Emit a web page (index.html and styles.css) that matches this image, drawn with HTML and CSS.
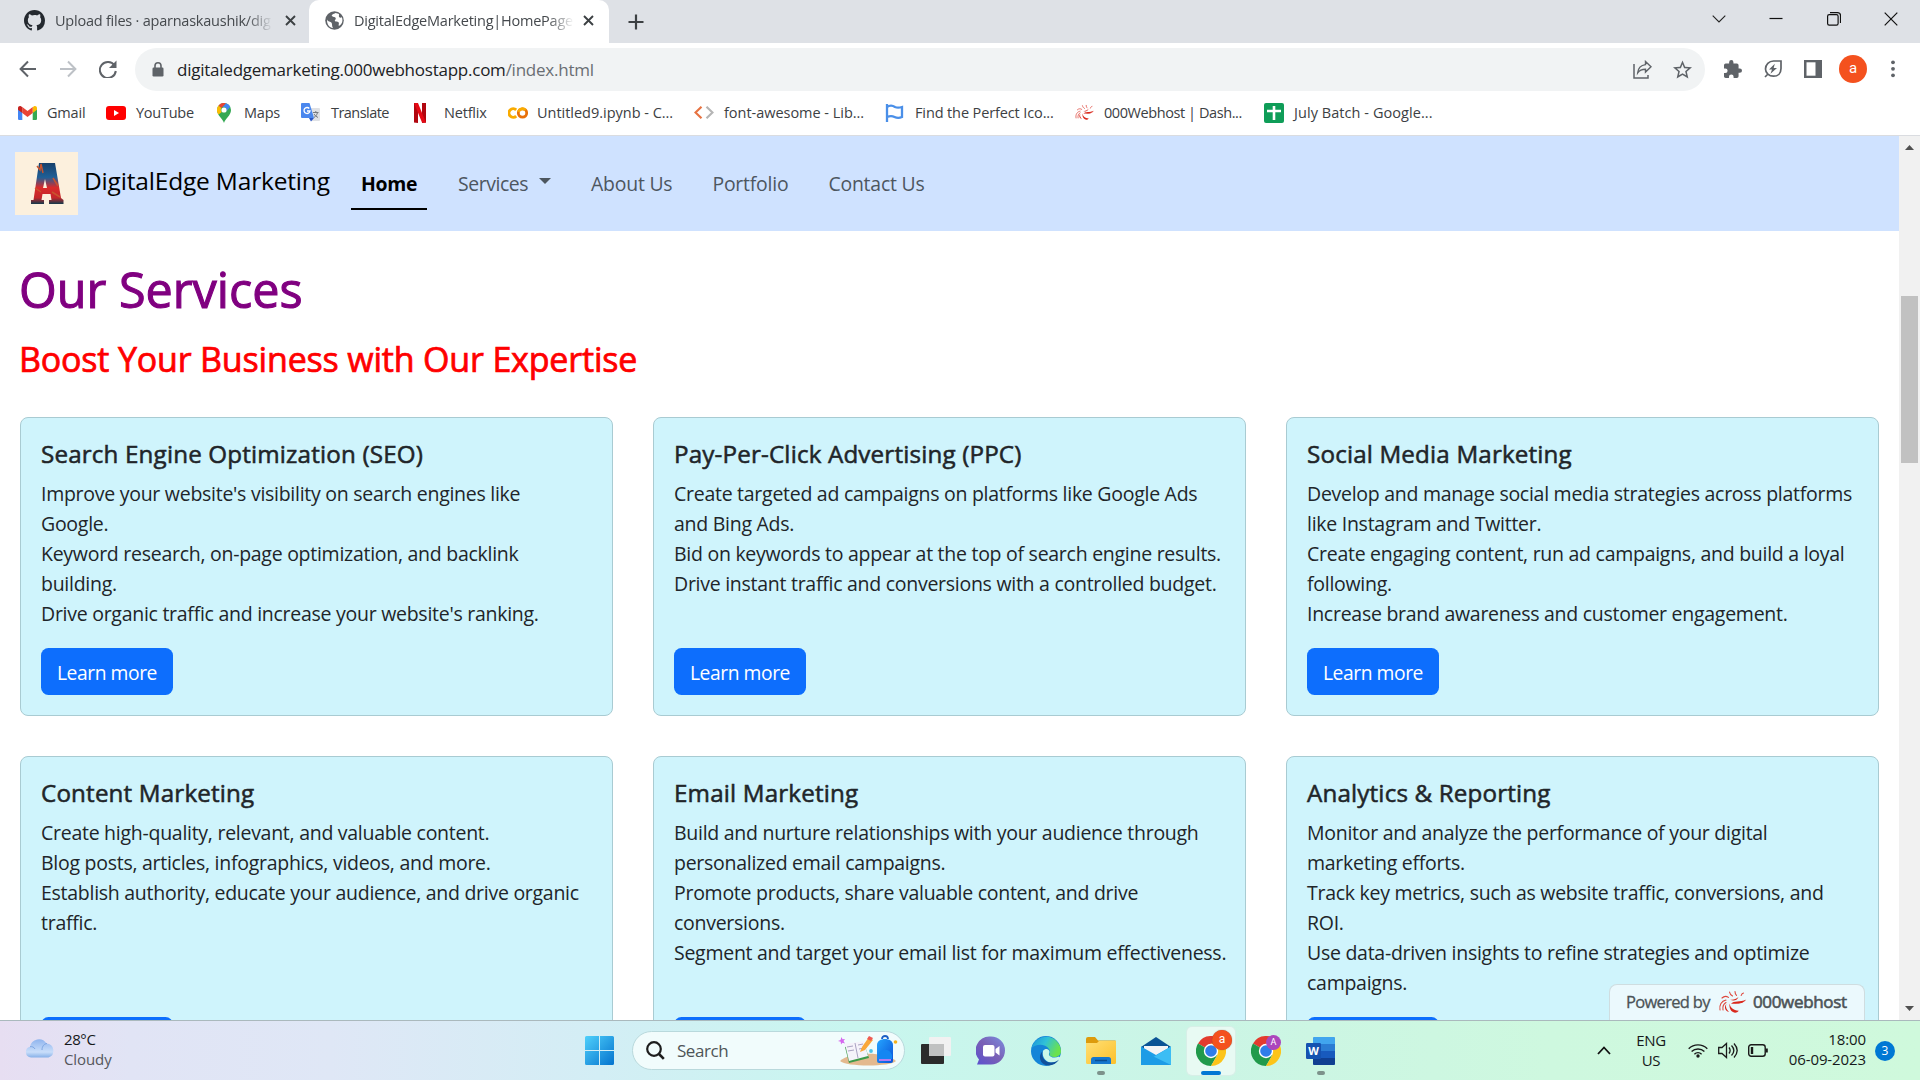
FILE: index.html
```
<!DOCTYPE html>
<html lang="en">
<head>
<meta charset="utf-8">
<title>DigitalEdgeMarketing|HomePage</title>
<link rel="stylesheet" href="styles.css">
</head>
<body>
<svg class="defs" width="0" height="0" aria-hidden="true">
  <defs>
    <symbol id="swirl" viewBox="0 0 28 24">
      <g fill="#d9281c">
        <path d="M27.800 9.500c-4.500 4.500-9.500 4-15.300 4.300 3-3.500 9-1.300 15.300-4.300Z"/>
        <path d="M27.500 10c-4 4.300-8 3.800-14 2.500 4 .5 9 .5 14-2.500Z"/>
        <path d="M11 13.500c1 4.500 3.500 6.500 9.300 7.300-3 4-10.300 1.500-9.300-7.300Z"/>
        <path d="M7.800 14c-1 3 .2 5.500 2.700 8-4-1-5.200-5-2.700-8Z"/>
        <path d="M11.500 9.500c3 .8 5.500-.2 8.500-2.500-1.500 3.800-5.500 4.500-8.500 2.500Z"/>
      </g>
      <g fill="none" stroke="#de463b" stroke-linecap="round" stroke-width="1.100">
        <path d="M1.500 20c-1-5 1.500-9 6-10M4.500 20c-.6-3.500.5-6 3-7.500M3.500 8c2-2 4.500-2 6.500-.6M11 2c.4 2 1.500 3.200 3 4M16.500 1.500c0 1.700.4 2.800 1.500 3.800M25 3c-1.300.3-2 1.200-2.300 2.500"/>
      </g>
    </symbol>
    <symbol id="chrome" viewBox="0 0 30 30">
      <path d="M15 15 2 7.500A15 15 0 0 1 28 7.500Z" fill="#e33b2e"/>
      <path d="M2 7.500A15 15 0 0 0 15 30l6.500-11.200L15 15Z" fill="#219a4b"/>
      <path d="M28 7.500A15 15 0 0 1 15 30l6.500-11.200L15 7.500Z" fill="#fcc419"/>
      <circle cx="15" cy="15" r="7.200" fill="#fff"/>
      <circle cx="15" cy="15" r="5.800" fill="#2f7de9"/>
    </symbol>
    <linearGradient id="winblue" x1="0" y1="0" x2="1" y2="1"><stop offset="0" stop-color="#4fd0fb"/><stop offset="1" stop-color="#0473ce"/></linearGradient>
    <linearGradient id="letter" x1="0" y1="0" x2="0" y2="1"><stop offset="0" stop-color="#17406b"/><stop offset=".35" stop-color="#1f5f96"/><stop offset=".6" stop-color="#d92b2b"/><stop offset=".85" stop-color="#c3262b"/><stop offset="1" stop-color="#113a4c"/></linearGradient>
    <linearGradient id="cloud" x1="0" y1="0" x2="0" y2="1"><stop offset="0" stop-color="#8fb4ee"/><stop offset=".7" stop-color="#c9defa"/><stop offset="1" stop-color="#86b0e8"/></linearGradient>
    <linearGradient id="chat" x1="1" y1="0" x2="0" y2="1"><stop offset="0" stop-color="#7b8fe0"/><stop offset=".5" stop-color="#7a5fb5"/><stop offset="1" stop-color="#5a50d0"/></linearGradient>
    <linearGradient id="edgea" x1="0" y1="0" x2="1" y2=".4"><stop offset="0" stop-color="#1a8fdc"/><stop offset=".5" stop-color="#30c1d8"/><stop offset="1" stop-color="#6be24c"/></linearGradient>
    <linearGradient id="folder" x1="0" y1="0" x2="1" y2="1"><stop offset="0" stop-color="#ffdf75"/><stop offset="1" stop-color="#fcc02a"/></linearGradient>
    <linearGradient id="bag" x1="0" y1="0" x2="1" y2="1"><stop offset="0" stop-color="#25a5ff"/><stop offset="1" stop-color="#0a52d8"/></linearGradient>
  </defs>
</svg>

<div class="browser">
  <header class="tabstrip">
    <div class="tab tab-idle">
      <svg width="21" height="21" viewBox="0 0 16 16"><path fill="#24292f" d="M8 0C3.580 0 0 3.580 0 8c0 3.540 2.290 6.530 5.470 7.590.4.070.55-.17.55-.38 0-.19-.01-.82-.01-1.490-2.010.37-2.530-.49-2.690-.94-.09-.23-.48-.94-.82-1.130-.28-.15-.68-.52-.01-.53.63-.01 1.080.58 1.230.82.72 1.210 1.870.87 2.330.66.070-.52.28-.87.51-1.070-1.780-.2-3.640-.89-3.640-3.950 0-.87.31-1.590.82-2.150-.08-.2-.36-1.020.08-2.120 0 0 .67-.21 2.200.82A7.600 7.600 0 0 1 8 3.860c.68 0 1.360.09 2 .27 1.530-1.040 2.200-.82 2.200-.82.44 1.100.16 1.920.08 2.120.51.56.82 1.270.82 2.150 0 3.070-1.870 3.750-3.650 3.950.29.25.54.73.54 1.480 0 1.070-.01 1.930-.01 2.200 0 .21.15.46.55.38A8 8 0 0 0 16 8c0-4.420-3.580-8-8-8Z"/></svg>
      <span class="tab-title">Upload files · aparnaskaushik/dig</span>
      <svg width="11" height="11" viewBox="0 0 11 11"><path d="m1 1 9 9M10 1l-9 9" stroke="#3c4043" stroke-width="1.900"/></svg>
    </div>
    <div class="tab tab-active">
      <svg width="19" height="19" viewBox="0 0 19 19"><circle cx="9.500" cy="9.500" r="9.300" fill="#5f6368"/><path d="M2 8.500c1 2.500 3.500 2 4.500 3.200 1 1.300 0 3 1.500 5.300-3.500-.5-6.300-3.500-6-8.500ZM10.500 2c-2 1.200-4.500 1.500-3.500 3 1.200 1.600 3 .4 3.700 1.900.6 1.600-1.500 2-.8 3.200.8 1.100 2.500.2 3.600 1.200 1.100 1-.4 2.600.4 3.700 3-1.500 4.400-5 3-8.700-1.500.8-3 .4-3-1-.1-1.300.6-2-.4-2.600Z" fill="#fff"/></svg>
      <span class="tab-title">DigitalEdgeMarketing|HomePage</span>
      <svg width="11" height="11" viewBox="0 0 11 11"><path d="m1 1 9 9M10 1l-9 9" stroke="#3c4043" stroke-width="1.900"/></svg>
    </div>
    <svg class="new-tab" width="16" height="16" viewBox="0 0 16 16"><path d="M8 .5v15M.5 8h15" stroke="#3c4043" stroke-width="2.200"/></svg>
    <div class="window-controls">
      <svg width="14" height="14" viewBox="0 0 14 14"><path d="m.7 3.700 6.300 6.300 6.300-6.300" fill="none" stroke="#222" stroke-width="1.100"/></svg>
      <svg width="14" height="14" viewBox="0 0 14 14"><path d="M.5 6.500h13" stroke="#111" stroke-width="1.200"/></svg>
      <svg width="14" height="14" viewBox="0 0 14 14"><rect x=".6" y="2.600" width="10.500" height="10.600" rx="1.600" fill="none" stroke="#111" stroke-width="1.200"/><path d="M3 .6h7.500a3 3 0 0 1 3 3V11" fill="none" stroke="#111" stroke-width="1.200"/></svg>
      <svg width="14" height="14" viewBox="0 0 14 14"><path d="m.7.7 12.600 12.600M13.300.7.7 13.300" stroke="#111" stroke-width="1.200"/></svg>
    </div>
  </header>

  <div class="toolbar">
    <div class="nav-buttons">
      <svg width="18" height="18" viewBox="0 0 18 18"><path d="M17 9H2M9 1.500 1.600 9 9 16.500" fill="none" stroke="#5f6368" stroke-width="2"/></svg>
      <svg width="18" height="18" viewBox="0 0 18 18"><path d="M1 9h15M9 1.500 16.400 9 9 16.500" fill="none" stroke="#bdc1c6" stroke-width="2"/></svg>
      <svg width="18" height="18" viewBox="0 0 18 18"><path d="M15.500 5.500A8 8 0 1 0 16.800 11" fill="none" stroke="#5f6368" stroke-width="2"/><path d="M17.500.5V8H10Z" fill="#5f6368"/></svg>
    </div>
    <div class="omnibox">
      <svg width="12" height="15" viewBox="0 0 12 15"><path d="M3 6V3.800a3 3 0 0 1 6 0V6" fill="none" stroke="#5f6368" stroke-width="1.600"/><rect x=".5" y="5.500" width="11" height="9" rx="1.200" fill="#5f6368"/></svg>
      <span class="url">digitaledgemarketing.000webhostapp.com<span class="path">/index.html</span></span>
      <svg class="share" width="19" height="19" viewBox="0 0 19 19"><path d="M1 4v14h14v-3" fill="none" stroke="#5f6368" stroke-width="1.500"/><path d="M12.500 1.500 18 6.800l-5.500 5.300V9.200c-3.500 0-6 1-7.800 3.600.4-4.300 3-7.600 7.800-8.200Z" fill="none" stroke="#5f6368" stroke-width="1.400"/></svg>
      <svg class="star" width="19" height="19" viewBox="2 1.500 20 20"><path d="m22 9.240-7.190-.62L12 2 9.190 8.630 2 9.240l5.460 4.730L5.820 21 12 17.270 18.180 21l-1.630-7.030L22 9.240ZM12 15.400l-3.760 2.270 1-4.280-3.320-2.880 4.380-.38L12 6.100l1.710 4.040 4.380.38-3.320 2.880 1 4.280L12 15.400Z" fill="#5f6368"/></svg>
    </div>
    <div class="toolbar-icons">
      <svg width="18" height="18" viewBox="2 1 21 21"><path fill="#5f6368" d="M20.500 11H19V7a2 2 0 0 0-2-2h-4V3.500a2.500 2.500 0 0 0-5 0V5H4a2 2 0 0 0-2 2v3.800h1.500a2.700 2.700 0 0 1 0 5.400H2V20c0 1.100.9 2 2 2h3.800v-1.500a2.700 2.700 0 0 1 5.400 0V22H17a2 2 0 0 0 2-2v-4h1.500a2.500 2.500 0 0 0 0-5Z"/></svg>
      <svg width="18" height="18" viewBox="0 0 18 18"><path d="M1 17l2.500-2.500M17 1v7.500c0 4.500-3 7.700-7.500 7.700S1.500 13 1.500 9C1.500 4.500 5 1 9.500 1Z" fill="none" stroke="#5f6368" stroke-width="1.700"/><path d="M10.800 3.800 5 9.500h3l-1.500 4.200L13 8H9.700Z" fill="#5f6368"/></svg>
      <svg width="18" height="18" viewBox="0 0 18 18"><path d="M0 0h18v18H0Z" fill="#5f6368"/><path d="M2.500 2.300h9v13.400h-9Z" fill="#fff"/></svg>
      <span class="avatar">a</span>
      <svg width="4" height="18" viewBox="0 0 4 18"><g fill="#5f6368"><circle cx="2" cy="2.300" r="1.900"/><circle cx="2" cy="8.800" r="1.900"/><circle cx="2" cy="15.300" r="1.900"/></g></svg>
    </div>
  </div>

  <nav class="bookmarks">
    <a class="bm bm-gmail"><svg width="19" height="14" viewBox="0 0 19 14"><path d="M0 2v10.700C0 13.400.6 14 1.300 14h3V6.500Z" fill="#4285f4"/><path d="M19 2v10.700c0 .7-.6 1.300-1.300 1.300h-3V6.500Z" fill="#34a853"/><path d="M14.700 1v6L19 3.800V2c0-1.700-1.800-2.500-3.200-1.600Z" fill="#fbbc04"/><path d="M4.300 7V1l5.200 4 5.200-4v6l-5.200 4Z" fill="#ea4335"/><path d="M0 2v1.800L4.300 7V1L3.200.4C1.800-.5 0 .3 0 2Z" fill="#c5221f"/></svg><span>Gmail</span></a>
    <a class="bm bm-youtube"><svg width="20" height="14" viewBox="0 0 20 14"><rect width="20" height="14" rx="3" fill="#f00"/><path d="m8 4 5 3-5 3Z" fill="#fff"/></svg><span>YouTube</span></a>
    <a class="bm bm-maps"><svg width="14" height="20" viewBox="0 0 14 20"><path d="M7 20C6 16 0 12.500 0 7a7 7 0 0 1 14 0c0 5.500-6 9-7 13Z" fill="#34a853"/><path d="M1.500 11.500A7 7 0 0 1 1.600 2.500L4.600 5a3 3 0 0 0 .2 4Z" fill="#fbbc04"/><path d="M1.600 2.500A7 7 0 0 1 9 .3L4.600 5Z" fill="#ea4335"/><path d="M9 .3A7 7 0 0 1 13.200 3.800L9.300 8.800A3 3 0 0 0 5 4.700Z" fill="#4285f4"/><circle cx="7" cy="7" r="2.600" fill="#fff"/></svg><span>Maps</span></a>
    <a class="bm bm-translate"><svg width="19" height="19" viewBox="0 0 19 19"><path d="M8 5h10a1 1 0 0 1 1 1v11a1 1 0 0 1-1 1h-7Z" fill="#dfe1e5"/><path d="M12 9.500h5.500M14.800 8v1.500M16.500 9.500c-.5 2.500-2 4-3.500 5M13 11c1 1.500 2.200 2.800 4 3.500" stroke="#75797e" fill="none"/><path d="M1 0h7.500L13 15H1a1 1 0 0 1-1-1V1a1 1 0 0 1 1-1Z" fill="#4a87ee"/><path d="M8 15h5l-3 3.500Z" fill="#2a56c6"/><path d="M8.300 5.500A3 3 0 1 0 9 8H6" stroke="#fff" stroke-width="1.300" fill="none"/></svg><span>Translate</span></a>
    <a class="bm bm-netflix"><svg width="12" height="20" viewBox="0 0 12 20"><path d="M0 0h4v20l-4-.5ZM8 0h4v19.500L8 20Z" fill="#b1060f"/><path d="M0 0h4l8 19.700-4-.3Z" fill="#e50914"/></svg><span>Netflix</span></a>
    <a class="bm bm-colab"><svg width="20" height="12" viewBox="0 0 20 12"><path d="M8.200 2.900a4.300 4.300 0 1 0 0 6.200" fill="none" stroke="#f9ab00" stroke-width="3"/><circle cx="14.500" cy="6" r="4.200" fill="none" stroke="#e8710a" stroke-width="2.800"/><path d="M10.500 4.800a4.200 4.200 0 0 1 7-1.800" fill="none" stroke="#f9ab00" stroke-width="2.800"/></svg><span>Untitled9.ipynb - C...</span></a>
    <a class="bm bm-fa"><svg width="20" height="13" viewBox="0 0 20 13"><path d="M7.500.8 1.500 6.500l6 5.700" fill="none" stroke="#e77342" stroke-width="2.200"/><path d="m12.500.8 6 5.700-6 5.700" fill="none" stroke="#b5b5b5" stroke-width="2.200"/></svg><span>font-awesome - Lib...</span></a>
    <a class="bm bm-flag"><svg width="19" height="18" viewBox="0 0 19 18"><path d="M2 0v18M2 3c3-2 5-2 8 0 2 1 4 1 7 0v10c-3 1.500-5 1.300-7.500 0S4.500 12 2 13" fill="none" stroke="#4a8fe8" stroke-width="2.300"/></svg><span>Find the Perfect Ico...</span></a>
    <a class="bm bm-webhost"><svg width="19" height="17"><use href="#swirl"/></svg><span>000Webhost | Dash...</span></a>
    <a class="bm bm-sheets"><svg width="20" height="20" viewBox="0 0 20 20"><rect width="20" height="20" rx="2" fill="#0f9d58"/><path d="M10 3v14M3 8h14" stroke="#fff" stroke-width="2.600"/></svg><span>July Batch - Google...</span></a>
  </nav>

  <div class="viewport">
    <main class="page">
      <nav class="navbar">
        <svg class="logo" width="63" height="63" viewBox="0 0 63 63"><rect width="63" height="63" fill="#fcf0dd"/><path d="M24 11h16l6 35 2.500 2v4H34v-4h2.500L35.500 42H27.500L26.500 48H29v4H16v-4h2.500Z" fill="url(#letter)"/><path d="m30 27 2 9h-4Z" fill="#fcf0dd"/><path d="m22 14 3 4 1-6 2 9M38 26l5 8M20 36l6 4M37 40l8 5" stroke="#c8542e" stroke-width="1.500" fill="none"/></svg>
        <a class="brand">DigitalEdge Marketing</a>
        <ul class="menu">
          <li class="active">Home</li>
          <li class="dropdown">Services</li>
          <li>About Us</li>
          <li>Portfolio</li>
          <li>Contact Us</li>
        </ul>
      </nav>
      <section class="services">
        <h1>Our Services</h1>
        <h2>Boost Your Business with Our Expertise</h2>
        <div class="cards">
          <article class="card"><h3>Search Engine Optimization (SEO)</h3>
            <p>Improve your website's visibility on search engines like<br>Google.<br>Keyword research, on-page optimization, and backlink<br>building.<br>Drive organic traffic and increase your website's ranking.</p>
            <a class="btn">Learn more</a></article>
          <article class="card"><h3>Pay-Per-Click Advertising (PPC)</h3>
            <p>Create targeted ad campaigns on platforms like Google Ads<br>and Bing Ads.<br>Bid on keywords to appear at the top of search engine results.<br>Drive instant traffic and conversions with a controlled budget.</p>
            <a class="btn">Learn more</a></article>
          <article class="card"><h3>Social Media Marketing</h3>
            <p>Develop and manage social media strategies across platforms<br>like Instagram and Twitter.<br>Create engaging content, run ad campaigns, and build a loyal<br>following.<br>Increase brand awareness and customer engagement.</p>
            <a class="btn">Learn more</a></article>
          <article class="card"><h3>Content Marketing</h3>
            <p>Create high-quality, relevant, and valuable content.<br>Blog posts, articles, infographics, videos, and more.<br>Establish authority, educate your audience, and drive organic<br>traffic.</p>
            <a class="btn"></a></article>
          <article class="card"><h3>Email Marketing</h3>
            <p>Build and nurture relationships with your audience through<br>personalized email campaigns.<br>Promote products, share valuable content, and drive<br>conversions.<br>Segment and target your email list for maximum effectiveness.</p>
            <a class="btn"></a></article>
          <article class="card"><h3>Analytics &amp; Reporting</h3>
            <p>Monitor and analyze the performance of your digital<br>marketing efforts.<br>Track key metrics, such as website traffic, conversions, and<br>ROI.<br>Use data-driven insights to refine strategies and optimize<br>campaigns.</p>
            <a class="btn"></a></article>
        </div>
      </section>
    </main>
    <div class="powered"><span class="by">Powered by</span><svg width="29" height="24"><use href="#swirl"/></svg><span class="host">000webhost</span></div>
    <div class="scrollbar">
      <svg width="9" height="5" viewBox="0 0 9 5"><path d="M0 5 4.500 0 9 5Z" fill="#505050"/></svg>
      <div class="track"><div class="thumb"></div></div>
      <svg width="9" height="5" viewBox="0 0 9 5"><path d="m0 0 4.500 5L9 0Z" fill="#505050"/></svg>
    </div>
  </div>
</div>

<footer class="taskbar">
  <div class="weather">
    <svg width="30" height="20" viewBox="0 0 30 20"><path d="M6 19.500A5.500 5.500 0 0 1 5 8.700 9 9 0 0 1 21.500 5.500 7.200 7.200 0 0 1 23.500 19.500Z" fill="url(#cloud)"/><path d="M10 11c-1-2-3-2.600-5-2.300M17 12c0-4 2.500-6.400 5-6.500" fill="none" stroke="#7da5e2" stroke-width="1"/></svg>
    <div class="readout"><div>28°C</div><div class="muted">Cloudy</div></div>
  </div>
  <div class="dock">
    <svg class="start" width="30" height="30" viewBox="0 0 30 30"><path d="M0 1.500A1.500 1.500 0 0 1 1.500 0H14v14H0ZM15 0h12.500A1.500 1.500 0 0 1 29 1.500V14H15ZM0 15h14v14H1.500A1.500 1.500 0 0 1 0 27.500ZM15 15h14v12.500a1.500 1.500 0 0 1-1.500 1.500H15Z" fill="url(#winblue)"/></svg>
    <div class="search">
      <svg width="19" height="19" viewBox="0 0 19 19"><circle cx="8" cy="8" r="6.800" fill="none" stroke="#1d1d1d" stroke-width="2.200"/><path d="m13 13 4.800 4.800" stroke="#1d1d1d" stroke-width="2.600"/></svg>
      <span>Search</span>
      <svg width="60" height="32" viewBox="0 0 60 32"><path d="M2 26c10-9 45-10 56 0-5 6-50 6-56 0Z" fill="#e3b98f"/><path d="m7 12 19-4 5 15-20 5Z" fill="#3f9b4a"/><path d="m7 9 19-3 4 15-19 5Z" fill="#f5f3fa"/><path d="m17 8 3 15M9 12l6-1M10 16l6-1M20 10l5-1M21 14l5-1" stroke="#a9a3c2" stroke-width="1"/><path d="m22 17 2-5 7-10 4 3-8 10Z" fill="#f9a83a"/><path d="m29 4 2-3 4 2-2 3Z" fill="#ef5a53"/><path d="M39 26V10c0-8 16-8 16 0v16q0 2-2 2H41q-2 0-2-2Z" fill="url(#bag)"/><path d="M44 4c0-4 6-4 6 0" fill="none" stroke="#1d5fc4" stroke-width="1.800"/><path d="M40 20c2-7 12-7 14 0v4H40Z" fill="#1486f2"/><path d="M41 25h12" stroke="#b27bf2" stroke-width="2"/><path d="m3.500 2 1 2.300L7 4l-1.500 2L7 8.500l-2.500-.8L3 9.500l-.3-2.700L0 6l2.500-1Z" fill="#d567ef"/><circle cx="33" cy="16" r="1.900" fill="#4cc3e6"/><circle cx="57.500" cy="7" r="1.800" fill="#f6b21b"/></svg>
    </div>
    <div class="apps">
      <div class="app"><svg width="30" height="30" viewBox="0 0 30 30"><rect y="8" width="23" height="20" rx="1" fill="#2b2b2b"/><rect x="8" y="1" width="22" height="19" rx="1" fill="#f1f1f1"/><path d="M8 8h15v12H8Z" fill="#c0c1c1"/></svg></div>
      <div class="app"><svg width="30" height="30" viewBox="0 0 30 30"><path d="M15 .5a14 14 0 0 1 0 28H1l2-5A14 14 0 0 1 15 .500Z" fill="url(#chat)"/><rect x="7" y="9" width="11.500" height="11.500" rx="2" fill="#fff"/><path d="m19.500 13 4-3v9.500l-4-3Z" fill="#fff"/></svg></div>
      <div class="app"><svg width="30" height="30" viewBox="0 0 30 30"><circle cx="15" cy="15" r="15" fill="#1585d8"/><path d="M.5 12A15 15 0 0 1 30 15c0 4-3 6-7 6-3 0-4.500-1-4.500-2.500S20 16 18 13C14 7 4 8 .500 12Z" fill="url(#edgea)"/><path d="M12 15c2-3 6-2.500 6.500.5.300 1.500-1 2-.5 3.500 1 2.500 6 3.500 10 1.500l1.500 1.500c-2 3-5 4.500-9 4.500-6 0-10-6-8.500-11.500Z" fill="#cbf7e9"/><path d="M11.500 15.500C10 21 14 27 20 26.500c3.500 0 6-1 8-3-4 7-14 8-18 2-2-4-1-8 1.500-10Z" fill="#12509a"/></svg></div>
      <div class="app"><svg width="30" height="28" viewBox="0 0 30 28"><path d="M0 6V2q0-2 2-2h7l3 3.500h17q1 0 1 1V10H0Z" fill="#dd9b0c"/><path d="M0 6h11l2-2h17v21.500q0 1.500-1.500 1.500h-27Q0 27 0 25.500Z" fill="url(#folder)"/><path d="M5 27v-4.500q0-2.500 2.500-2.500h15q2.500 0 2.500 2.500V27Z" fill="#1577ce"/><path d="M9 23.500h12" stroke="#0b4d91" stroke-width="1.500"/></svg><i class="dot"></i></div>
      <div class="app"><svg width="30" height="28" viewBox="0 0 30 28"><path d="M0 10 15 0l15 10v4H0Z" fill="#0b5395"/><path d="M3 9h24v13H3Z" fill="#f4f4f6"/><path d="M0 9.500 15 18l15-8.500V28H0Z" fill="#1f9ee8"/><path d="m30 9.500-18 10.800L27 28h3Z" fill="#3cbdf4"/><path d="M12.500 19.500 30 28H0V9.500Z" fill="#1c9ce6"/></svg></div>
      <div class="app current"><svg width="30" height="30"><use href="#chrome"/></svg><b class="profile orange">a</b><i class="dot"></i></div>
      <div class="app"><svg width="30" height="30"><use href="#chrome"/></svg><b class="profile purple">A</b></div>
      <div class="app word"><svg width="30" height="28" viewBox="0 0 30 28"><rect x="7" width="22" height="28" rx="1.500" fill="#2b7cd3"/><path d="M7 1.500Q7 0 8.500 0h19Q29 0 29 1.500V7H7Z" fill="#41a5ee"/><path d="M7 14h22v7H7Z" fill="#185abd"/><path d="M7 21h22v5.500q0 1.500-1.500 1.500h-19Q7 28 7 26.500Z" fill="#103f91"/><rect y="6" width="15" height="16" rx="1.200" fill="#1552b0"/></svg><b class="wletter">W</b><i class="dot"></i></div>
    </div>
  </div>
  <div class="tray">
    <svg width="14" height="9" viewBox="0 0 14 9"><path d="m1 8 6-6.500L13 8" fill="none" stroke="#111" stroke-width="1.800"/></svg>
    <div class="lang"><div>ENG</div><div>US</div></div>
    <svg class="wifi" width="20" height="15" viewBox="0 0 20 15"><g fill="none" stroke="#1a1a1a" stroke-width="1.400"><path d="M.7 5.800a13 13 0 0 1 18.600 0M3.600 8.600a9 9 0 0 1 12.800 0M6.400 11.200a5.200 5.200 0 0 1 7.200 0"/></g><circle cx="10" cy="13" r="1.700" fill="#1a1a1a"/></svg>
    <svg class="sound" width="20" height="17" viewBox="0 0 20 17"><g fill="none" stroke="#1a1a1a" stroke-width="1.300"><path d="M.7 5.500H4L8.500 1.500v14L4 11.500H.7ZM11 5.500c1.500 2 1.500 4 0 6M13.500 3.500c3 3.200 3 6.800 0 10M16 1.500c4 4.400 4 9.600 0 14"/></g></svg>
    <svg class="battery" width="20" height="13" viewBox="0 0 20 13"><rect x=".7" y=".7" width="16.500" height="11.500" rx="2.500" fill="none" stroke="#1a1a1a" stroke-width="1.400"/><path d="M2.800 3h2.400v7H2.800ZM17.500 4.500h2.300v4h-2.300Z" fill="#1a1a1a"/></svg>
    <div class="clock"><div>18:00</div><div>06-09-2023</div></div>
    <span class="count">3</span>
  </div>
</footer>
</body>
</html>
```
FILE: styles.css
```
* { box-sizing: border-box; }
html, body { height: 100%; }
body {
  margin: 0;
  width: 1920px;
  height: 1080px;
  overflow: hidden;
  display: flex;
  flex-direction: column;
  background: #fff;
  color: #212529;
  font-family: "Open Sans", "Noto Sans", sans-serif;
}
svg { display: block; flex: none; }
.defs { position: absolute; }
.browser { height: 1020px; display: flex; flex-direction: column; }

/* Tab strip */
.tabstrip {
  height: 43px;
  flex: none;
  display: flex;
  align-items: center;
  background: #dee1e6;
}
.tab { height: 43px; display: flex; align-items: center; font-size: 14.5px; letter-spacing: -0.23px; color: #45494d; }
.tab-idle { width: 309px; padding: 0 0 2px 24px; border-radius: 0 0 10px 0; }
.tab-idle .tab-title { width: 218px; margin: 0 12px 0 10px; }
.tab-active { width: 300px; padding: 0 0 2px 16px; background: #fff; border-radius: 10px 10px 0 0; }
.tab-active .tab-title { width: 220px; margin: 0 9px 0 10px; }
.tab-title {
  overflow: hidden;
  white-space: nowrap;
  -webkit-mask-image: linear-gradient(90deg, #000 88%, transparent);
  mask-image: linear-gradient(90deg, #000 88%, transparent);
}
.new-tab { margin-left: 19px; }
.window-controls { margin-left: auto; padding: 0 22px 6px 0; display: flex; gap: 43.500px; }

/* Address bar */
.toolbar { height: 53px; flex: none; display: flex; align-items: center; padding: 0 25px 0 19px; }
.nav-buttons { width: 116px; padding-bottom: 1px; display: flex; gap: 22px; }
.omnibox {
  width: 1570px;
  height: 43px;
  display: flex;
  align-items: center;
  padding: 0 13px 0 17px;
  border-radius: 22px;
  background: #f1f3f4;
}
.url { margin-left: 13px; font-size: 17px; letter-spacing: -0.24px; color: #202124; }
.path { color: #6a6e73; }
.share { margin-left: auto; }
.star { margin-left: 21px; }
.toolbar-icons { margin-left: 19px; flex: 1; display: flex; align-items: center; padding-bottom: 1px; }
.toolbar-icons svg + svg { margin-left: 22px; }
.avatar {
  width: 28px;
  height: 28px;
  margin: 0 24px 0 17px;
  border-radius: 50%;
  background: #f4511e;
  color: #fff;
  text-align: center;
  font: 15px/27px "Roboto", sans-serif;
}

/* Bookmarks */
.bookmarks {
  height: 40px;
  flex: none;
  display: flex;
  align-items: center;
  padding: 0 0 6px 18px;
  border-bottom: 1px solid #dadce0;
}
.bm { display: flex; align-items: center; gap: 10px; font-size: 14.5px; letter-spacing: -0.2px; color: #3c4043; white-space: nowrap; }
.bm-gmail { width: 88px; }
.bm-youtube { width: 111px; letter-spacing: -0.25px; }
.bm-maps { width: 84px; gap: 13px; }
.bm-translate { width: 113px; gap: 11px; letter-spacing: -0.55px; }
.bm-netflix { width: 94px; gap: 18px; }
.bm-colab { width: 186px; gap: 9px; letter-spacing: -0.02px; }
.bm-fa { width: 191px; letter-spacing: -0.03px; }
.bm-flag { width: 190px; gap: 11px; letter-spacing: -0.12px; }
.bm-webhost { width: 189px; letter-spacing: -0.42px; }
.bm-sheets { letter-spacing: 0.06px; }

/* Page viewport */
.viewport { position: relative; height: 884px; flex: none; display: flex; overflow: hidden; }
.page { width: 1899px; flex: none; }
.navbar { height: 95px; padding: 0 0 0 15px; display: flex; align-items: center; background: #cfe2ff; }
.brand { width: 267px; margin: -6px 0 0 6px; font-size: 24.5px; letter-spacing: -0.18px; color: #000; white-space: nowrap; }
.menu { margin: 0; padding: 0; display: flex; list-style: none; gap: 20px; font-size: 19.4px; letter-spacing: -0.2px; color: #4d565f; }
.menu li { height: 53px; padding: 12px 10px 0; line-height: 30px; border-bottom: 2px solid transparent; }
.menu .active { width: 76px; font-weight: 700; letter-spacing: -0.3px; color: #000; border-color: #000; }
.menu .dropdown { width: 114px; padding-left: 11px; display: flex; gap: 11px; letter-spacing: -0.42px; }
.dropdown::after {
  content: "";
  margin-top: 9px;
  height: 0;
  border: 6px solid transparent;
  border-top-color: #4d565f;
  border-bottom: 0;
}

.services { padding: 28px 20px 0; }
/* The stroke thickens the regular cut to a medium weight. */
h1, h2, h3 { margin: 0; font-weight: 500; white-space: nowrap; -webkit-text-stroke: 0.022em currentColor; }
h1 { margin-left: -1px; font-size: 48.5px; line-height: 60px; letter-spacing: 0; color: purple; }
h2 { margin: 19px 0 0 -1px; font-size: 34px; line-height: 42px; letter-spacing: -0.18px; color: red; }
.cards { margin-top: 37px; display: grid; grid-template-columns: repeat(3, 593px); gap: 40px; }
.card {
  min-height: 299px;
  padding: 21px 20px 20px;
  display: flex;
  flex-direction: column;
  align-items: flex-start;
  border: 1px solid #a9cbd2;
  border-radius: 8px;
  background: #cff4fc;
}
h3 { font-size: 24.2px; line-height: 30px; letter-spacing: 0.16px; }
.card p { margin: 10px 0 19px; font-size: 19.5px; line-height: 30px; letter-spacing: -0.27px; white-space: nowrap; }
.btn {
  width: 132px;
  height: 47px;
  margin-top: auto;
  border-radius: 7.5px;
  background: #0d6efd;
  color: #fff;
  text-align: center;
  font-size: 19.3px;
  line-height: 50px;
  letter-spacing: -0.45px;
}

.powered {
  position: absolute;
  right: 55px;
  bottom: 0;
  width: 256px;
  height: 36px;
  display: flex;
  align-items: center;
  padding: 0 0 2px 16px;
  border: 1px solid #cfdde0;
  border-bottom: 0;
  border-radius: 8px 8px 0 0;
  background: #ebf9fd;
  color: #4c5357;
  font-size: 16.500px;
}
.by { width: 92px; letter-spacing: -0.68px; -webkit-text-stroke: 0.3px currentColor; }
.host { margin-left: 6px; font: 17px "Open Sans", sans-serif; letter-spacing: -0.35px; -webkit-text-stroke: 0.6px currentColor; }

.scrollbar { width: 21px; display: flex; flex-direction: column; align-items: center; padding: 9px 0; background: #f1f1f1; }
.track { flex: 1; width: 17px; padding-top: 146px; }
.thumb { height: 167px; background: #c1c1c1; }

/* Taskbar */
.taskbar {
  height: 60px;
  display: flex;
  align-items: center;
  border-top: 1px solid #aab9bd;
  background: linear-gradient(90deg, #e7def2 0, #e1e4f5 130px, #dfe7f6 330px, #d3eef5 600px, #c8f6ef 850px, #cbf5e5 1200px, #cef8df 1550px, #cff9dc 1920px);
  font-size: 15px;
  line-height: 20px;
  color: #16191a;
}
.weather { width: 585px; padding-left: 25px; display: flex; align-items: center; gap: 9px; letter-spacing: -0.4px; }
.weather > svg { margin-top: -6px; }
.readout { padding-bottom: 4px; }
.muted { color: #55575c; letter-spacing: -0.1px; }
.dock { display: flex; align-items: center; }
.start { margin-right: 17px; }
.search {
  width: 273px;
  height: 39px;
  display: flex;
  align-items: center;
  padding: 0 6px 0 13px;
  border: 1px solid #b9d9dc;
  border-radius: 20px;
  background: #f1fcfc;
  font-size: 17px;
  letter-spacing: -0.45px;
  color: #4e5557;
}
.search span { margin: 0 auto 0 12px; }
.apps { display: flex; margin-left: 7px; gap: 7px; }
.app { position: relative; width: 48px; height: 48px; display: flex; align-items: center; justify-content: center; border-radius: 5px; }
.current { background: #e8faf3; box-shadow: 0 0 0 1px #d7efe7; }
.dot { position: absolute; left: 20px; bottom: 0; width: 8px; height: 4px; border-radius: 2px; background: #7d928b; }
.current .dot { left: 14px; width: 20px; background: #0078d4; }
.profile { position: absolute; border-radius: 50%; color: #fff; text-align: center; font-family: "Roboto", sans-serif; font-weight: 400; }
.orange { left: 25px; top: 3px; width: 20px; height: 20px; background: #f4511e; font-size: 12px; line-height: 19px; box-shadow: 0 0 1px #7d4433; }
.purple { left: 24px; top: 8px; width: 15px; height: 15px; background: #ab47bc; font-size: 9px; line-height: 15px; }
.wletter { position: absolute; left: 9px; top: 14px; width: 15px; text-align: center; color: #fff; font-size: 11px; }
.tray { margin-left: auto; padding-right: 25px; display: flex; align-items: center; }
.lang { width: 40px; margin-left: 20px; padding-bottom: 2px; text-align: center; letter-spacing: -0.3px; }
.wifi { margin-left: 17px; }
.sound { margin-left: 10px; }
.battery { margin-left: 10px; }
.clock { width: 98px; padding-bottom: 3px; text-align: right; letter-spacing: -0.1px; }
.count { width: 20px; height: 20px; margin-left: 9px; border-radius: 50%; background: #0078d4; color: #fff; text-align: center; font-size: 12px; line-height: 20px; }
```
